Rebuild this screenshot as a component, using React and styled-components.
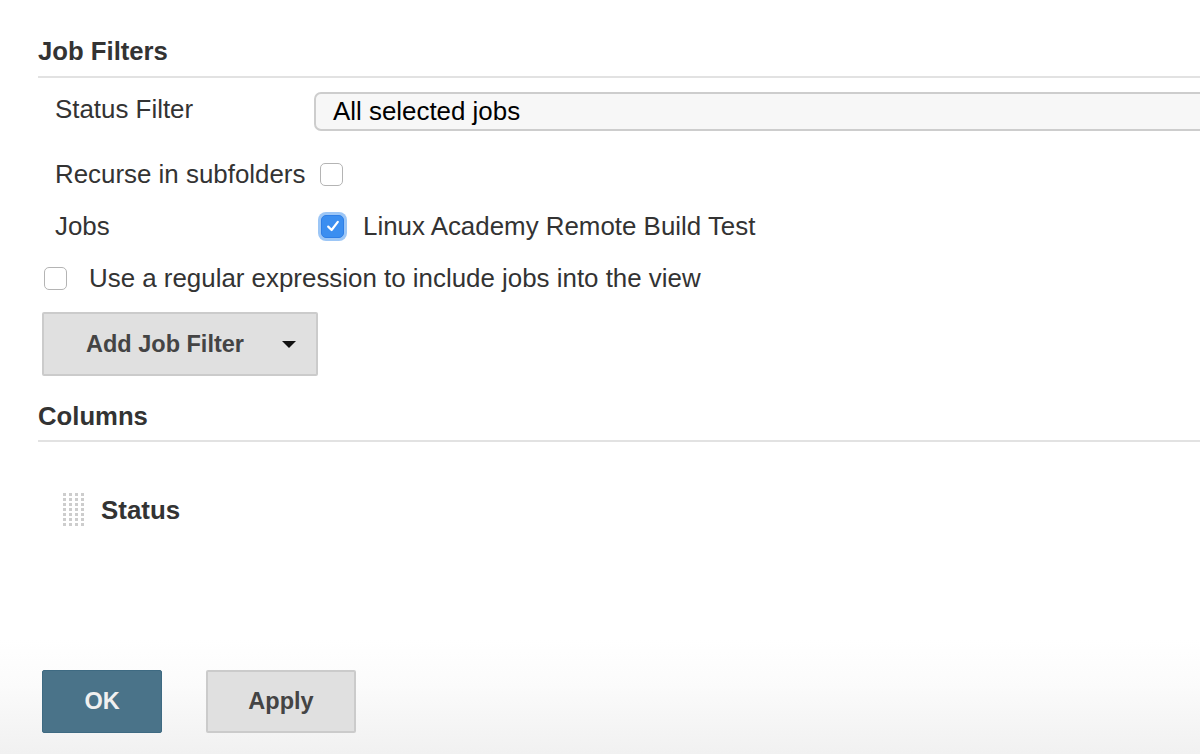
import React from 'react';
import styled, { createGlobalStyle } from 'styled-components';

const GlobalStyle = createGlobalStyle`
  html, body {
    margin: 0;
    padding: 0;
    overflow: hidden;
    background: #fff;
  }
  body {
    font-family: "Liberation Sans", Arial, sans-serif;
    font-size: 25.9px;
    color: #333;
  }
`

// styled components
const Page = styled.div`
  display: flex;
  flex-direction: column;
  min-height: 754px;
  width: 1200px;
  overflow: hidden;
`
const Main = styled.div`
  padding-left: 38px;
`
const SectionHeader = styled.div`
  margin-top: ${p => p.$top}px;
  padding-bottom: ${p => p.$pad}px;
  border-bottom: 2px solid #e2e2e2;
  font-weight: bold;
  font-size: 25.7px;
  line-height: 30px;
  color: #333;
`
const FormRow = styled.div`
  display: grid;
  grid-template-columns: 259px 1fr;
  align-items: center;
  height: ${p => p.$h || 52}px;
  margin-top: ${p => p.$top || 0}px;
  padding-left: 17px;
`
const Label = styled.div`
  line-height: 30px;
  white-space: nowrap;
  margin-top: ${p => p.$shift || 0}px;
`
const Value = styled.div`
  display: flex;
  align-items: center;
  gap: 19px;
  white-space: nowrap;
`
const Select = styled.div`
  box-sizing: border-box;
  width: 1000px;
  height: 39px;
  border: 2px solid #cdcdcd;
  border-radius: 7px;
  background: #f7f7f7;
  color: #000;
  padding-left: 17px;
  line-height: 35px;
`
const Box = styled.span`
  box-sizing: border-box;
  display: inline-flex;
  align-items: center;
  justify-content: center;
  width: 23px;
  height: 23px;
  border-radius: 5px;
  flex-shrink: 0;
  border: 1px solid ${p => (p.$checked ? '#2f7fe6' : '#b4b4b4')};
  background: ${p => (p.$checked ? '#3b8ef0' : '#fff')};
  box-shadow: ${p => (p.$checked ? '0 0 0 3px #9cc6f6' : 'none')};
  margin-left: ${p => p.$ml || 0}px;
`
const CheckRow = styled.div`
  display: flex;
  align-items: center;
  gap: 22px;
  height: 52px;
  padding-left: 6px;
`
const DropButton = styled.button`
  box-sizing: border-box;
  display: flex;
  align-items: center;
  margin: 8px 0 0 4px;
  width: 276px;
  height: 64px;
  padding: 0 0 0 42px;
  background: #e0e0e0;
  border: 2px solid #cbcbcb;
  border-radius: 2px;
  font-family: inherit;
  font-size: 23.5px;
  font-weight: bold;
  color: #444;
  cursor: pointer;
`
const Caret = styled.span`
  margin-left: 38px;
  width: 0;
  height: 0;
  border-left: 7px solid transparent;
  border-right: 7px solid transparent;
  border-top: 7px solid #111;
`
const ColumnItem = styled.div`
  display: flex;
  align-items: center;
  gap: 15px;
  margin-top: 50px;
  padding-left: 24px;
  font-weight: bold;
  line-height: 30px;
  color: #333;
`
const BottomBar = styled.div`
  margin-top: auto;
  display: flex;
  gap: 44px;
  padding: 30px 0 21px 42px;
  background: linear-gradient(to bottom, #ffffff 0%, #fbfbfb 40%, #f1f1f1 100%);
`
const ActionButton = styled.button`
  box-sizing: border-box;
  width: ${p => p.$w}px;
  height: 63px;
  border-radius: 2px;
  font-family: inherit;
  font-size: 23.5px;
  font-weight: bold;
  cursor: pointer;
  background: ${p => (p.$primary ? '#4a7389' : '#e0e0e0')};
  border: ${p => (p.$primary ? '1px solid #3e6a82' : '2px solid #cbcbcb')};
  color: ${p => (p.$primary ? '#f0f0f0' : '#444')};
`

const Check = () => (
  <svg width="16" height="16" viewBox="0 0 16 16">
    <path d="M3.2 8.6 L6.6 12 L12.8 3.8" fill="none" stroke="#fff" strokeWidth="2.2" strokeLinecap="round" strokeLinejoin="round" />
  </svg>
)

// dotted drag handle next to each column
const DragHandle = () => {
  const dots = [];
  for (let r = 0; r < 7; r++) {
    for (let c = 0; c < 4; c++) {
      dots.push(<rect key={r + '-' + c} x={1 + c * 6} y={1 + r * 5} width="3" height="3" fill="#cdcdcd" />);
    }
  }
  return (
    <svg width="24" height="35" viewBox="0 0 24 35">{dots}</svg>
  )
}

const App = () => {
  return (
    <Page>
      <GlobalStyle />
      <Main>
        <SectionHeader $top={36} $pad={10}>Job Filters</SectionHeader>
        <FormRow $h={39} $top={14}>
          <Label $shift={-5}>Status Filter</Label>
          <Select>All selected jobs</Select>
        </FormRow>
        <FormRow $top={17}>
          <Label>Recurse in subfolders</Label>
          <Value><Box $ml={6} /></Value>
        </FormRow>
        <FormRow>
          <Label>Jobs</Label>
          <Value>
            <Box $checked $ml={7}><Check /></Box>
            <span>Linux Academy Remote Build Test</span>
          </Value>
        </FormRow>
        <CheckRow>
          <Box />
          <span>Use a regular expression to include jobs into the view</span>
        </CheckRow>
        <DropButton>
          Add Job Filter
          <Caret />
        </DropButton>
        <SectionHeader $top={25} $pad={9}>Columns</SectionHeader>
        <ColumnItem>
          <DragHandle />
          Status
        </ColumnItem>
      </Main>
      <BottomBar>
        <ActionButton $primary $w={120}>OK</ActionButton>
        <ActionButton $w={150}>Apply</ActionButton>
      </BottomBar>
    </Page>
  )
}
export default App;
